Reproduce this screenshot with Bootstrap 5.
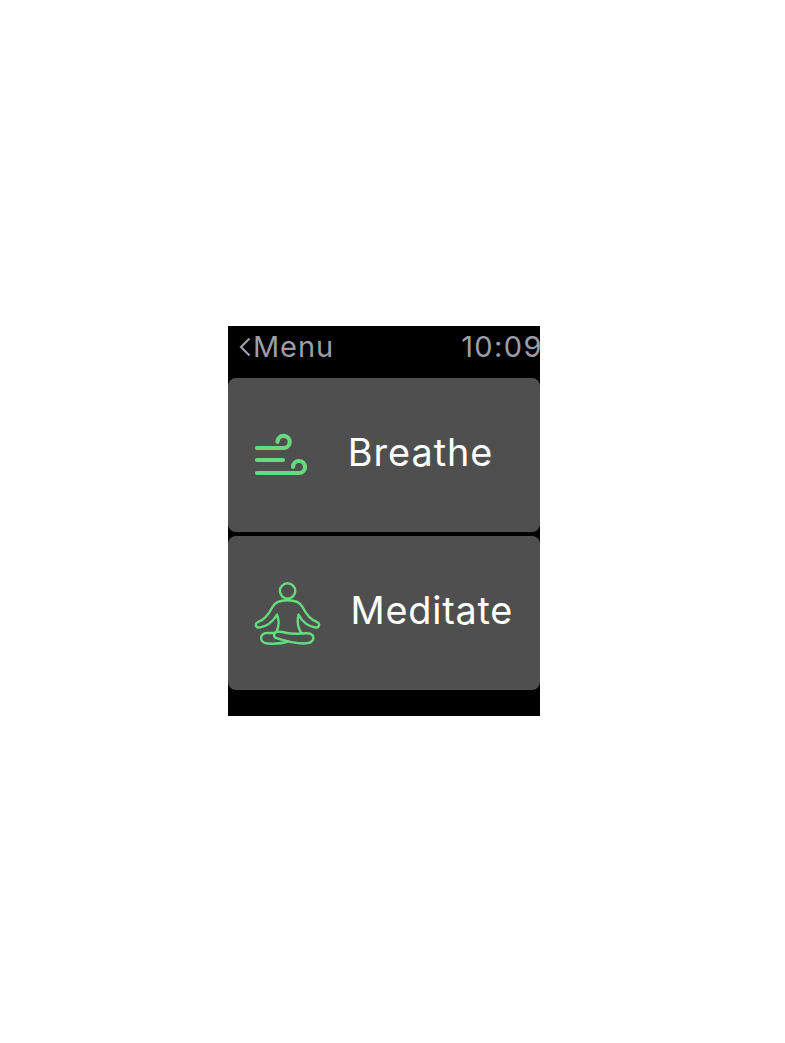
<!DOCTYPE html>
<html lang="en">
<head>
<meta charset="utf-8">
<meta name="viewport" content="width=device-width, initial-scale=1">
<title>Menu</title>
<link href="https://cdn.jsdelivr.net/npm/bootstrap@5.3.0/dist/css/bootstrap.min.css" rel="stylesheet">
<style>
body{font-family:Inter,Roboto,sans-serif;background:#fff}
.watch{width:312px;height:390px;margin:326px 0 0 228px;background:#000}
.status{height:52px;color:#9b9eaa;font-size:29px;line-height:34px;padding:4px 0 0 11px}
.status .title{letter-spacing:.9px;padding-left:1px}
.status .clock{letter-spacing:1.4px;margin-right:-2.9px}
.choice{height:154px;border-radius:8px;background:#4f4f4f;color:#fff;font-size:37.8px;line-height:44px}
.choice + .choice{margin-top:4px}
.choice svg{fill:none;stroke:#66db7e;stroke-linecap:round;stroke-linejoin:round}
.breathe{letter-spacing:1px;padding-left:39.7px}
.meditate{letter-spacing:.8px;padding-left:25.5px}
.choice span{margin-bottom:6px}
</style>
</head>
<body>
<main class="watch">
  <header class="status d-flex justify-content-between align-items-start">
    <div class="d-flex">
      <svg class="flex-shrink-0" width="13" height="34" viewBox="239 330 13 34" fill="none" stroke="currentColor" stroke-width="2.2"><path d="M249.5 338.5L241 347L249.5 355.5"/></svg>
      <span class="title">Menu</span>
    </div>
    <span class="clock">10:09</span>
  </header>
  <a href="#" class="choice d-flex align-items-center text-decoration-none">
    <svg class="flex-shrink-0" width="80" height="154" viewBox="228 378 80 154" stroke-width="4.2"><path d="M257 448H283.5A6.1 6.1 0 1 0 277.5 441.8M257 460H283M257 473H299A6 6 0 1 0 293 467"/></svg>
    <span class="breathe">Breathe</span>
  </a>
  <a href="#" class="choice d-flex align-items-center text-decoration-none">
    <svg class="flex-shrink-0" width="97" height="154" viewBox="228 536 97 154" stroke-width="2.4"><circle cx="287.6" cy="591" r="7.7"/><path d="M276.3 632C279 627 279.5 621 277 614.5C273 622 266 627 259.5 627.5C255.5 628 254.5 623.5 258 622C264 620 269 614 272.5 607C275 602 280 600.3 287.5 600.3C295 600.3 300 602 302.5 607C306 614 311 620 317 622C320.5 623.5 319.5 628 315.5 627.5C309 627 302 622 298.5 614.5C297 621 298 628 301.5 633.5M275 633H267C259 633 259 643.5 268 643.5C275 644 282 643.5 288 641.5M277 631.8C273.5 632.5 273 637 276.5 638.2C285 641 294 643.5 304 643.5C316 643.5 316 633 307 633.3C297 633.8 292 634.4 287 633C283 632 280 631.3 277 631.8Z"/></svg>
    <span class="meditate">Meditate</span>
  </a>
</main>
<script src="https://cdn.jsdelivr.net/npm/bootstrap@5.3.0/dist/js/bootstrap.bundle.min.js"></script>
</body>
</html>
